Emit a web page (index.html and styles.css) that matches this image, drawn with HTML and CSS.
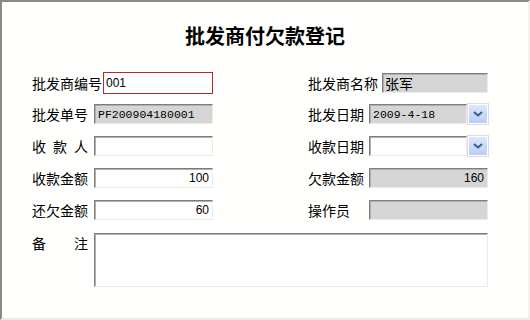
FILE: index.html
```html
<!DOCTYPE html>
<html>
  <head>
    <meta charset="utf-8">
    <title>批发商付欠款登记</title>
    <link rel="stylesheet" href="styles.css">
  </head>
  <body>
    <div class="frame">
      <h1 class="title">批发商付欠款登记</h1>
      <div class="form">
        <div class="row first">
          <div class="half">
            <label class="lbl wide">批发商编号</label><input class="box active w110" value="001">
          </div>
          <div class="half">
            <label class="lbl wide gap4">批发商名称</label><input class="box ro cn w106" value="张军" readonly>
          </div>
        </div>
        <div class="row">
          <div class="half">
            <label class="lbl">批发单号</label><input class="box ro mono w119" value="PF200904180001" readonly>
          </div>
          <div class="half">
            <label class="lbl gap5">批发日期</label><input class="box ro mono w98" value="2009-4-18" readonly><span class="drop"><svg width="10" height="6" viewBox="0 0 10 6"><path d="M1 1l4 3.5L9 1" fill="none" stroke="#3f5a8c" stroke-width="2"/></svg></span>
          </div>
        </div>
        <div class="row">
          <div class="half">
            <label class="lbl spread">收款人</label><input class="box w119" value="">
          </div>
          <div class="half">
            <label class="lbl gap5">收款日期</label><input class="box w98" value=""><span class="drop"><svg width="10" height="6" viewBox="0 0 10 6"><path d="M1 1l4 3.5L9 1" fill="none" stroke="#3f5a8c" stroke-width="2"/></svg></span>
          </div>
        </div>
        <div class="row">
          <div class="half">
            <label class="lbl">收款金额</label><input class="box num w119" value="100">
          </div>
          <div class="half">
            <label class="lbl gap5">欠款金额</label><input class="box ro num w119" value="160" readonly>
          </div>
        </div>
        <div class="row">
          <div class="half">
            <label class="lbl">还欠金额</label><input class="box num w119" value="60">
          </div>
          <div class="half">
            <label class="lbl gap5">操作员</label><input class="box ro w119" value="" readonly>
          </div>
        </div>
        <div class="row memo">
          <label class="lbl spread">备注</label><textarea class="box note"></textarea>
        </div>
      </div>
    </div>
  </body>
</html>
```
FILE: styles.css
```css
body{margin:0;background:#fffffe;font-family:"Noto Sans CJK SC","Liberation Sans",sans-serif;color:#000}
.frame{width:530px;height:320px;box-sizing:border-box;overflow:hidden;border-style:solid;border-width:2px;border-color:#8a8a80 #f2f1ea #ecebe3 #8a8a80;background:#fffffe}
.title{margin:0;padding-top:21px;font-size:20px;line-height:26px;font-weight:bold;text-align:center}
.form{padding:23px 0 0 30px;display:flex;flex-direction:column;gap:12px}
.row{display:flex;align-items:center;height:20px}
.row.first{height:22px;margin-bottom:-2px}
.half{width:276px;display:flex;align-items:center;flex:none}
.half + .half{width:auto;flex:1}
.lbl{display:inline-block;width:56px;margin-right:6px;font-size:14px;line-height:20px;white-space:nowrap}
.lbl.wide{width:70px;margin-right:1px}
.lbl.gap4{margin-right:4px}
.lbl.gap5{margin-right:5px}
.lbl.spread{text-align-last:justify}
.box{box-sizing:border-box;height:20px;margin:0;padding:0 3px;border:1px solid;border-color:#7c7c7c #ecebe4 #ecebe4 #7c7c7c;box-shadow:inset 1px 1px 0 #b0b0b0;background:#fff;font-family:"Liberation Sans",sans-serif;font-size:12px;color:#000;outline:none}
.box.active{height:22px;border:1px solid #b8282c;box-shadow:none;padding:0 2px}
.box.ro{background:#d5d5d5}
.box.mono{font-family:"Liberation Mono",monospace;font-size:11.5px}
.box.cn{font-family:"Noto Sans CJK SC",sans-serif;font-size:14px;padding:0 2px}
.box.num{text-align:right}
.w98{width:98px}
.w106{width:106px}
.w110{width:110px}
.w119{width:119px}
.drop{box-sizing:border-box;width:20px;height:20px;margin-left:1px;display:flex;align-items:center;justify-content:center;border:1px solid #fff;box-shadow:0 0 0 1px #d8dde8;background:linear-gradient(#dbe6fd,#b9cdf6)}
.row.memo{height:54px;align-items:flex-start;margin-top:1px}
.note{width:394px;height:54px;resize:none;padding:2px}
```
